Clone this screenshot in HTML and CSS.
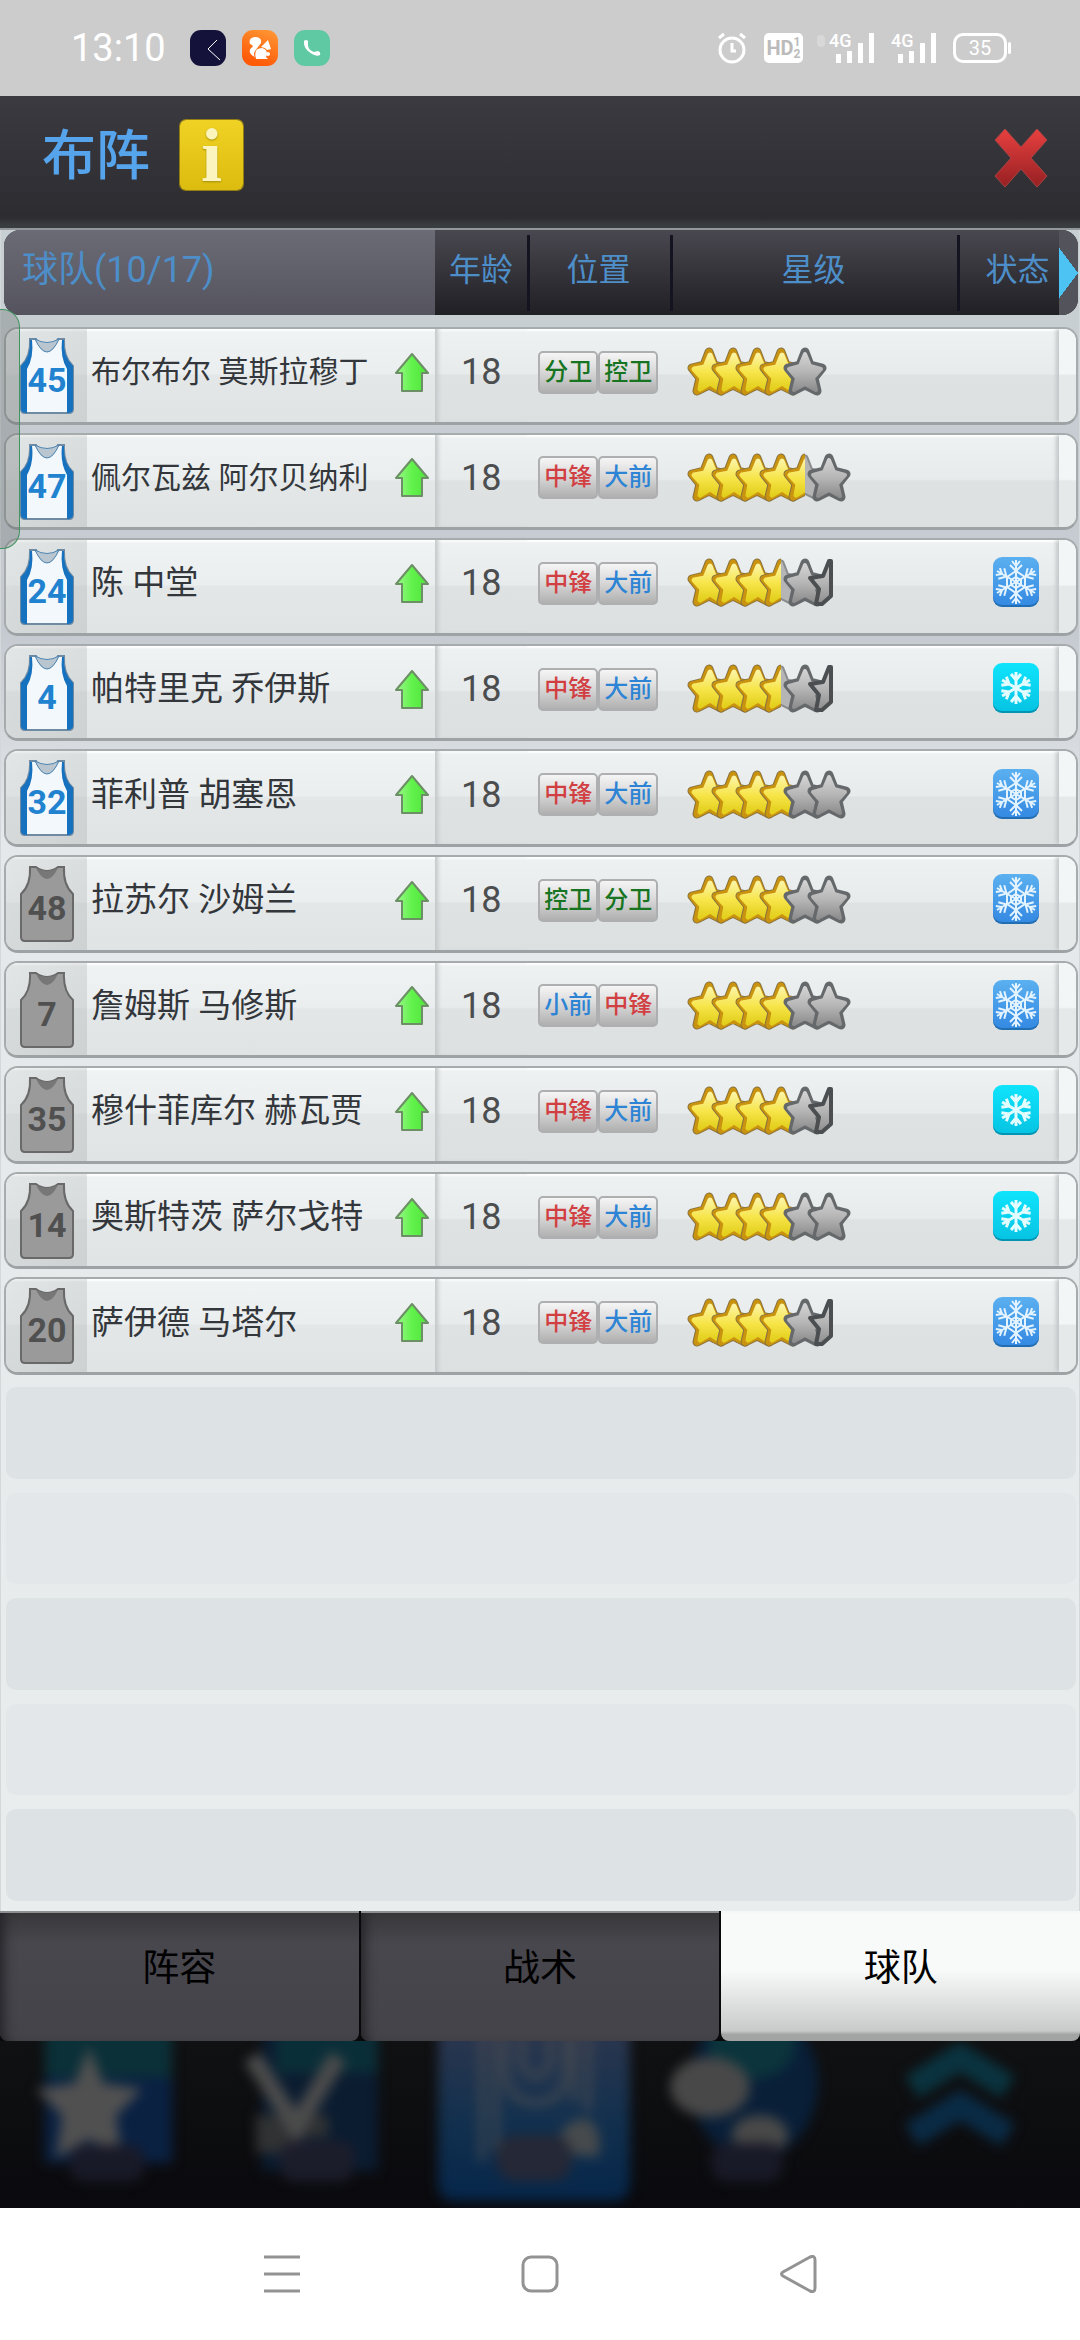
FILE: index.html
```html
<!DOCTYPE html>
<html lang="zh-CN">
<head>
<meta charset="utf-8">
<meta name="viewport" content="width=device-width, initial-scale=1">
<title>布阵</title>
<link rel="stylesheet" href="styles.css">
</head>
<body>
<svg class="sprite" aria-hidden="true">
  <defs>
    <linearGradient id="gold" x1="0" y1="0" x2="0" y2="1"><stop offset="0" stop-color="#fbf3a0"/><stop offset=".5" stop-color="#f7e54a"/><stop offset="1" stop-color="#e3cf1c"/></linearGradient>
    <linearGradient id="grey" x1="0" y1="0" x2="0" y2="1"><stop offset="0" stop-color="#d2d2d2"/><stop offset=".5" stop-color="#b5b5b5"/><stop offset="1" stop-color="#8e8e8e"/></linearGradient>
    <linearGradient id="green" x1="0" y1="0" x2="1" y2="0"><stop offset="0" stop-color="#9cf78a"/><stop offset=".5" stop-color="#62f24c"/><stop offset="1" stop-color="#4fe33a"/></linearGradient>
    <linearGradient id="red" x1="0" y1="0" x2="0" y2="1"><stop offset="0" stop-color="#e8403f"/><stop offset="1" stop-color="#962022"/></linearGradient>
    <clipPath id="left"><rect width="22" height="50"/></clipPath>
    <clipPath id="right"><rect x="22" width="24" height="50"/></clipPath>
    <path id="shape" d="M22 5 27 18 39 21 31 31 34 44 22 38 10 44 13 31 5 21 17 18z" stroke-linejoin="round"/>
  </defs>
  <symbol id="gold-star" viewBox="0 0 44 50">
    <use href="#shape" fill="#8a6a10" stroke="#857140" stroke-width="9"/>
    <use href="#shape" fill="#c9920f" stroke="#c9920f" stroke-width="7"/>
    <path d="M23 8 28 20 38 23 30 31 32 42 23 36 13 42 15 31 7 22 18 20z" fill="url(#gold)" stroke="url(#gold)" stroke-width="5" stroke-linejoin="round"/>
  </symbol>
  <symbol id="grey-star" viewBox="0 0 44 50">
    <use href="#shape" fill="#66696b" stroke="#66696b" stroke-width="9"/>
    <path d="M22 7 27 19 38 22 30 31 33 43 22 37 11 43 14 31 6 22 17 19z" fill="url(#grey)" stroke="url(#grey)" stroke-width="4" stroke-linejoin="round"/>
  </symbol>
  <symbol id="half-star" viewBox="0 0 44 50">
    <g clip-path="url(#right)"><use href="#shape" fill="#b5b5b5" stroke="#8a8c8e" stroke-width="7"/><use href="#shape" fill="#b5b5b5" stroke="#b5b5b5" stroke-width="3"/></g>
    <g clip-path="url(#left)"><use href="#gold-star" width="44" height="50"/></g>
  </symbol>
  <symbol id="cut-star" viewBox="0 0 44 50">
    <path d="M22 3 16 18 3 20 12 31 9 46 15 46 24 38V3z" fill="url(#grey)" stroke="#4c4f51" stroke-width="4" stroke-linejoin="round"/>
  </symbol>
  <symbol id="stars-4-of-5" viewBox="0 0 164 50">
    <use href="#gold-star" width="44" height="50"/><use href="#gold-star" x="24" width="44" height="50"/><use href="#gold-star" x="48" width="44" height="50"/><use href="#gold-star" x="72" width="44" height="50"/><use href="#grey-star" x="96" width="44" height="50"/>
  </symbol>
  <symbol id="stars-45-of-6" viewBox="0 0 164 50">
    <use href="#gold-star" width="44" height="50"/><use href="#gold-star" x="24" width="44" height="50"/><use href="#gold-star" x="48" width="44" height="50"/><use href="#gold-star" x="72" width="44" height="50"/><use href="#half-star" x="96" width="44" height="50"/><use href="#grey-star" x="120" width="44" height="50"/>
  </symbol>
  <symbol id="stars-35-of-55" viewBox="0 0 164 50">
    <use href="#gold-star" width="44" height="50"/><use href="#gold-star" x="24" width="44" height="50"/><use href="#gold-star" x="48" width="44" height="50"/><use href="#half-star" x="72" width="44" height="50"/><use href="#grey-star" x="96" width="44" height="50"/><use href="#cut-star" x="120" width="44" height="50"/>
  </symbol>
  <symbol id="stars-4-of-6" viewBox="0 0 164 50">
    <use href="#gold-star" width="44" height="50"/><use href="#gold-star" x="24" width="44" height="50"/><use href="#gold-star" x="48" width="44" height="50"/><use href="#gold-star" x="72" width="44" height="50"/><use href="#grey-star" x="96" width="44" height="50"/><use href="#grey-star" x="120" width="44" height="50"/>
  </symbol>
  <symbol id="stars-4-of-55" viewBox="0 0 164 50">
    <use href="#gold-star" width="44" height="50"/><use href="#gold-star" x="24" width="44" height="50"/><use href="#gold-star" x="48" width="44" height="50"/><use href="#gold-star" x="72" width="44" height="50"/><use href="#grey-star" x="96" width="44" height="50"/><use href="#cut-star" x="120" width="44" height="50"/>
  </symbol>
  <symbol id="up" viewBox="0 0 36 39">
    <path d="M18 1 34 20H28V38H8V20H2z" fill="url(#green)" stroke="#6c8f66" stroke-width="2" stroke-linejoin="round"/>
  </symbol>
  <symbol id="jersey-home" viewBox="0 0 54 78">
    <path d="M10 2H16Q27 26 38 2H44Q43 20 53 29V72Q53 76 49 76H5Q1 76 1 72V29Q11 20 10 2z" fill="#f3f8fc" stroke="#6f8ba3" stroke-width="2"/>
    <path d="M15 2Q27 28 39 2 27 9 15 2z" fill="#b9c6cf" stroke="#4d86b4"/>
    <path d="M10 3Q11 20 1 29V72Q1 76 7 76V32Q14 20 12 3zM44 3Q43 20 53 29V72Q53 76 47 76V32Q40 20 42 3z" fill="#1672bf"/>
  </symbol>
  <symbol id="jersey-bench" viewBox="0 0 54 78">
    <path d="M10 2H16Q27 10 38 2H44Q43 20 53 29V72Q53 76 49 76H5Q1 76 1 72V29Q11 20 10 2z" fill="#9a9a9a" stroke="#696969" stroke-width="2"/>
    <path d="M16 3Q27 25 38 3 27 9 16 3z" fill="#777"/>
  </symbol>
  <symbol id="flake-blue" viewBox="0 0 46 50">
    <g fill="none" stroke="#e3f3ff" stroke-width="2">
      <g id="branch"><path d="M23 25V3M19 4 23 9 27 4M17 8 23 14 29 8"/></g>
      <use href="#branch" transform="rotate(60 23 25)"/><use href="#branch" transform="rotate(120 23 25)"/><use href="#branch" transform="rotate(180 23 25)"/><use href="#branch" transform="rotate(240 23 25)"/><use href="#branch" transform="rotate(300 23 25)"/>
      <path d="M23 14 32 20V30L23 36 14 30V20zM23 20 28 23V28L23 31 18 28V23z"/>
    </g>
  </symbol>
  <symbol id="flake-cyan" viewBox="0 0 46 50">
    <g fill="none" stroke="#e3fcff" stroke-width="3">
      <g id="twig"><path d="M23 25V9M18 11 23 17 28 11"/></g>
      <use href="#twig" transform="rotate(60 23 25)"/><use href="#twig" transform="rotate(120 23 25)"/><use href="#twig" transform="rotate(180 23 25)"/><use href="#twig" transform="rotate(240 23 25)"/><use href="#twig" transform="rotate(300 23 25)"/>
    </g>
  </symbol>
</svg>

<div class="phone">
  <header class="status">
    <time>13:10</time>
    <svg class="app" viewBox="0 0 36 36" aria-hidden="true"><rect width="36" height="36" rx="11" fill="#14123a"/><path d="M27 10 18 19 30 30" fill="none" stroke="#fff"/></svg>
    <svg class="app" viewBox="0 0 36 36" aria-hidden="true"><defs><linearGradient id="uc" x1="1" y1="0" x2=".6" y2="1"><stop offset="0" stop-color="#ff9a36"/><stop offset="1" stop-color="#ff5a08"/></linearGradient></defs><rect width="36" height="36" rx="11" fill="url(#uc)"/><path d="M13 27Q5 23 9 18 13 16 8 14 6 8 13 7 20 7 19 13L13 21Q11 24 13 27zM19 17 26 10 29 19 25 20 23 18zM14 29Q11 18 20 18 27 20 24 27L26 29z" fill="#fff"/><circle cx="26" cy="24" r="2" fill="#fff"/></svg>
    <svg class="app" viewBox="0 0 36 36" aria-hidden="true"><rect width="36" height="36" rx="11" fill="#5fc9a4"/><path d="M10 11Q12 9 14 11V15Q14 20 20 22L24 21Q27 22 26 25 23 27 18 24 9 19 10 11z" fill="#fff"/></svg>
    <span class="spacer"></span>
    <svg class="alarm" viewBox="0 0 30 32" aria-hidden="true"><g fill="none" stroke="#fff" stroke-width="3"><circle cx="15" cy="18" r="12"/><path d="M2 6 7 2M28 6 23 2M15 11V19H19"/></g></svg>
    <span class="hd"><b>HD</b><span><i>1</i><i>2</i></span></span>
    <span class="signal updown"><small>4G</small><svg viewBox="0 0 39 30" aria-hidden="true"><path d="M1 21h5v9H1zM12 18h5v12h-5zM23 10h5v20h-5zM34 0h5v30h-5z" fill="#fff"/></svg></span>
    <span class="signal"><small>4G</small><svg viewBox="0 0 39 30" aria-hidden="true"><path d="M1 21h5v9H1zM12 18h5v12h-5zM23 10h5v20h-5zM34 0h5v30h-5z" fill="#fff"/></svg></span>
    <span class="battery">35</span>
  </header>

  <div class="titlebar">
    <h1>布阵</h1>
    <button class="info" type="button" aria-label="说明">i</button>
    <button class="close" type="button" aria-label="关闭"><svg viewBox="0 0 54 60"><path d="M11 1 27 19 43 1 53 12 37 30 53 48 43 59 27 41 11 59 1 48 17 30 1 12z" fill="url(#red)" stroke="#a44" stroke-width="1"/></svg></button>
  </div>

  <main class="panel">
    <table class="team">
      <thead>
        <tr><th class="count" scope="col">球队(10/17)</th><th scope="col">年龄</th><th scope="col">位置</th><th scope="col">星级</th><th class="state" scope="col">状态</th></tr>
      </thead>
      <tbody>
        <tr>
          <th scope="row"><span class="jersey"><svg viewBox="0 0 54 78"><use href="#jersey-home"/></svg><b>45</b></span><span class="name long">布尔布尔 莫斯拉穆丁</span><svg class="up"><use href="#up"/></svg></th>
          <td class="age">18</td><td class="tags"><span class="tag guard">分卫</span><span class="tag guard">控卫</span></td>
          <td class="stars"><svg><use href="#stars-4-of-5"/></svg></td><td class="state"></td>
        </tr>
        <tr>
          <th scope="row"><span class="jersey"><svg viewBox="0 0 54 78"><use href="#jersey-home"/></svg><b>47</b></span><span class="name long">佩尔瓦兹 阿尔贝纳利</span><svg class="up"><use href="#up"/></svg></th>
          <td class="age">18</td><td class="tags"><span class="tag center">中锋</span><span class="tag forward">大前</span></td>
          <td class="stars"><svg><use href="#stars-45-of-6"/></svg></td><td class="state"></td>
        </tr>
        <tr>
          <th scope="row"><span class="jersey"><svg viewBox="0 0 54 78"><use href="#jersey-home"/></svg><b>24</b></span><span class="name">陈 中堂</span><svg class="up"><use href="#up"/></svg></th>
          <td class="age">18</td><td class="tags"><span class="tag center">中锋</span><span class="tag forward">大前</span></td>
          <td class="stars"><svg><use href="#stars-35-of-55"/></svg></td><td class="state"><svg class="flake blue"><use href="#flake-blue"/></svg></td>
        </tr>
        <tr>
          <th scope="row"><span class="jersey"><svg viewBox="0 0 54 78"><use href="#jersey-home"/></svg><b>4</b></span><span class="name">帕特里克 乔伊斯</span><svg class="up"><use href="#up"/></svg></th>
          <td class="age">18</td><td class="tags"><span class="tag center">中锋</span><span class="tag forward">大前</span></td>
          <td class="stars"><svg><use href="#stars-35-of-55"/></svg></td><td class="state"><svg class="flake cyan"><use href="#flake-cyan"/></svg></td>
        </tr>
        <tr>
          <th scope="row"><span class="jersey"><svg viewBox="0 0 54 78"><use href="#jersey-home"/></svg><b>32</b></span><span class="name">菲利普 胡塞恩</span><svg class="up"><use href="#up"/></svg></th>
          <td class="age">18</td><td class="tags"><span class="tag center">中锋</span><span class="tag forward">大前</span></td>
          <td class="stars"><svg><use href="#stars-4-of-6"/></svg></td><td class="state"><svg class="flake blue"><use href="#flake-blue"/></svg></td>
        </tr>
        <tr class="bench">
          <th scope="row"><span class="jersey"><svg viewBox="0 0 54 78"><use href="#jersey-bench"/></svg><b>48</b></span><span class="name">拉苏尔 沙姆兰</span><svg class="up"><use href="#up"/></svg></th>
          <td class="age">18</td><td class="tags"><span class="tag guard">控卫</span><span class="tag guard">分卫</span></td>
          <td class="stars"><svg><use href="#stars-4-of-6"/></svg></td><td class="state"><svg class="flake blue"><use href="#flake-blue"/></svg></td>
        </tr>
        <tr class="bench">
          <th scope="row"><span class="jersey"><svg viewBox="0 0 54 78"><use href="#jersey-bench"/></svg><b>7</b></span><span class="name">詹姆斯 马修斯</span><svg class="up"><use href="#up"/></svg></th>
          <td class="age">18</td><td class="tags"><span class="tag forward">小前</span><span class="tag center">中锋</span></td>
          <td class="stars"><svg><use href="#stars-4-of-6"/></svg></td><td class="state"><svg class="flake blue"><use href="#flake-blue"/></svg></td>
        </tr>
        <tr class="bench">
          <th scope="row"><span class="jersey"><svg viewBox="0 0 54 78"><use href="#jersey-bench"/></svg><b>35</b></span><span class="name">穆什菲库尔 赫瓦贾</span><svg class="up"><use href="#up"/></svg></th>
          <td class="age">18</td><td class="tags"><span class="tag center">中锋</span><span class="tag forward">大前</span></td>
          <td class="stars"><svg><use href="#stars-4-of-55"/></svg></td><td class="state"><svg class="flake cyan"><use href="#flake-cyan"/></svg></td>
        </tr>
        <tr class="bench">
          <th scope="row"><span class="jersey"><svg viewBox="0 0 54 78"><use href="#jersey-bench"/></svg><b>14</b></span><span class="name">奥斯特茨 萨尔戈特</span><svg class="up"><use href="#up"/></svg></th>
          <td class="age">18</td><td class="tags"><span class="tag center">中锋</span><span class="tag forward">大前</span></td>
          <td class="stars"><svg><use href="#stars-4-of-6"/></svg></td><td class="state"><svg class="flake cyan"><use href="#flake-cyan"/></svg></td>
        </tr>
        <tr class="bench">
          <th scope="row"><span class="jersey"><svg viewBox="0 0 54 78"><use href="#jersey-bench"/></svg><b>20</b></span><span class="name">萨伊德 马塔尔</span><svg class="up"><use href="#up"/></svg></th>
          <td class="age">18</td><td class="tags"><span class="tag center">中锋</span><span class="tag forward">大前</span></td>
          <td class="stars"><svg><use href="#stars-4-of-55"/></svg></td><td class="state"><svg class="flake blue"><use href="#flake-blue"/></svg></td>
        </tr>
        <tr class="empty"><td></td></tr>
        <tr class="empty light"><td></td></tr>
        <tr class="empty"><td></td></tr>
        <tr class="empty light"><td></td></tr>
        <tr class="empty"><td></td></tr>
      </tbody>
    </table>
  </main>

  <div class="tabs">
    <button type="button">阵容</button>
    <button type="button">战术</button>
    <button type="button" class="active">球队</button>
  </div>

  <nav class="dock">
    <button type="button" aria-label="新闻"><svg viewBox="0 0 216 167"><path d="M45-20H172V122H45z" fill="#0a2142"/><path d="M45-20H172V36H45z" fill="#0b3038"/><path d="M89 6 103 42 142 48 116 75 122 117 89 98 56 117 62 75 36 48 75 42z" fill="#505050"/><rect x="70" y="104" width="74" height="36" rx="14" fill="#191a28"/></svg></button>
    <button type="button" aria-label="财务"><svg viewBox="0 0 216 167"><path d="M46-20H162V130H46z" fill="#0b1c30"/><path d="M60-20H162V32H60z" fill="#0a2e38"/><path d="M40 74H112V96H84V112H40z" fill="#303233"/><path d="M36 16 80 86 122 16" fill="none" stroke="#4b4b4b" stroke-width="18"/><rect x="64" y="100" width="74" height="40" rx="14" fill="#1c1d2b"/></svg></button>
    <button type="button" aria-label="球队"><svg viewBox="0 0 216 167"><defs><linearGradient id="court" x1="0" y1="0" x2="0" y2="1"><stop offset="0" stop-color="#34384e"/><stop offset=".6" stop-color="#12304e"/><stop offset="1" stop-color="#06264a"/></linearGradient></defs><rect x="6" y="-40" width="192" height="200" rx="16" fill="url(#court)"/><path d="M50-20V120M64-20V110M142-20V60M156-20V70M74-20V30Q76 62 104 62 132 62 134 30V-20M90-20V24Q104 48 118 24V-20" fill="none" stroke="#4a4d50" stroke-width="5"/><path d="M124 112Q128 76 156 78 172 90 166 116z" fill="#464a4c"/><rect x="64" y="94" width="76" height="46" rx="20" fill="#252836"/></svg></button>
    <button type="button" aria-label="消息"><svg viewBox="0 0 216 167"><ellipse cx="106" cy="42" rx="64" ry="76" fill="#091f38"/><ellipse cx="104" cy="2" rx="44" ry="36" fill="#0b343c"/><ellipse cx="62" cy="46" rx="40" ry="30" fill="#484848"/><ellipse cx="112" cy="94" rx="28" ry="20" fill="#484848"/><rect x="64" y="102" width="70" height="38" rx="14" fill="#191a28"/></svg></button>
    <button type="button" aria-label="更多"><svg viewBox="0 0 216 167"><path d="M48 46 96 16 144 46" fill="none" stroke="#0a333f" stroke-width="26"/><path d="M48 94 96 64 144 94" fill="none" stroke="#0a2b45" stroke-width="26"/></svg></button>
  </nav>

  <footer class="system">
    <button type="button" aria-label="菜单"><svg viewBox="0 0 38 38"><path d="M1 2H37M1 19H37M1 36H37" /></svg></button>
    <button type="button" aria-label="主页"><svg viewBox="0 0 38 38"><rect x="2" y="2" width="34" height="34" rx="8"/></svg></button>
    <button type="button" aria-label="返回"><svg viewBox="0 0 38 38"><path d="M31 2Q36 0 36 5V33Q36 38 31 36L4 21Q1 19 4 17z"/></svg></button>
  </footer>

  <div class="handle" aria-hidden="true"></div>
</div>
</body>
</html>
```
FILE: styles.css
```css
* { box-sizing: border-box; }
body { margin: 0; font-family: Roboto, "Noto Sans CJK SC", sans-serif; background: #fff; }
button { font: inherit; border: 0; padding: 0; background: none; color: inherit; }
svg { display: block; }
.sprite { position: absolute; width: 0; height: 0; }
.phone { position: relative; display: flex; flex-direction: column; min-height: 100vh; }

/* device status bar */
.status { display: flex; align-items: center; height: 96px; padding: 0 73px 0 71px; background: #ccc; color: #fff; }
.status time { font-size: 38px; line-height: 44px; margin-right: 24px; }
.app { width: 36px; height: 36px; margin-right: 16px; }
.spacer { flex: 1; }
.alarm { width: 30px; height: 32px; margin-right: 17px; }
.hd { display: flex; align-items: center; justify-content: center; width: 39px; height: 30px; margin-right: 26px; border-radius: 5px; background: #fff; color: #bbb; font-size: 20px; }
.hd span { display: flex; flex-direction: column; }
.hd i { font-style: normal; font-weight: 700; font-size: 12px; line-height: 12px; }
.signal { position: relative; width: 46px; height: 30px; margin-right: 16px; padding-left: 6px; }
.signal svg { width: 39px; height: 30px; }
.signal small { position: absolute; left: 0; top: 0; font-size: 18px; line-height: 16px; font-weight: 500; }
.updown::before { content: ""; position: absolute; left: -12px; top: 2px; width: 8px; height: 12px; border-radius: 4px; background: #d8d8d8; }
.battery { position: relative; width: 54px; height: 30px; border: 3px solid #fff; border-radius: 10px; text-align: center; font-size: 20px; line-height: 24px; }
.battery::after { content: ""; position: absolute; right: -7px; top: 6px; width: 3px; height: 12px; border-radius: 2px; background: #fff; }

/* title bar */
.titlebar { display: flex; align-items: center; height: 134px; padding: 0 32px 14px 42px; background: linear-gradient(#3b3a40, #2d2c31 92%, #3a3d40 98%); border-bottom: 2px solid #92989b; }
.titlebar h1 { margin: 0 30px 0 0; padding-top: 3px; font-size: 54px; line-height: 64px; font-weight: 500; color: #55a4ec; }
.info { width: 63px; height: 70px; border-radius: 6px; background: linear-gradient(#f0d225, #dcbc0e); box-shadow: 0 0 0 1px #927d14; color: #fbf5bd; font-family: "Liberation Serif", serif; font-weight: 700; font-size: 76px; line-height: 64px; text-shadow: 0 1px 2px #a38c10; }
.close { margin-left: auto; padding-top: 6px; }
.close svg { width: 54px; height: 60px; }

/* roster */
.panel { flex: 1; display: flex; padding: 0 1px 8px 3px; background: linear-gradient(#c9d0d3 0, #c5cad1 400px, #e4e8ea 600px, #e9edee); border: solid #d3d8da; border-width: 0 1px; }
.team { flex: 1; display: flex; flex-direction: column; gap: 12px; }
.team tr { display: grid; grid-template-columns: 431fr 92fr 143fr 287fr 121fr; }
.team th, .team td { padding: 0; font-weight: 400; min-width: 0; }
.team thead tr { height: 85px; border-radius: 16px; overflow: hidden; background: linear-gradient(#494850, #201f24); color: #4d8ec9; font-size: 32px; }
.team thead th { position: relative; line-height: 80px; }
.team thead th + th + th::before { content: ""; position: absolute; left: 0; top: 5px; bottom: 4px; width: 3px; background: #141420; }
.team thead .count { padding-left: 18px; text-align: left; font-size: 36px; background: linear-gradient(#6b6b76, #55545e); }
.team thead .state::after { content: ""; position: absolute; right: 0; top: 0; bottom: 0; width: 19px; background: conic-gradient(from 217deg at 100% 50%, #4cc3f3 0 106deg, transparent 0) 0 50% / 19px 54px no-repeat #53535c; }
.team tbody { flex: 1; display: grid; grid-auto-rows: minmax(90px, 1fr); gap: 8px; }
.team tbody tr { border: 2px solid #a6abad; border-bottom: 3px solid #9da2a4; border-radius: 14px; overflow: hidden; background: linear-gradient(#fff 0 1px, #edf1f2 3px, #e8ebec 48%, #dee2e3 50%, #dde0e1); }
.team tbody th, .team tbody td { display: flex; align-items: center; padding-bottom: 6px; }
.team tbody th { background: linear-gradient(#fff 0 1px, #eff3f4 3px, #ebeeef 48%, #e3e7e8 50%, #e1e4e5); }
.jersey { position: relative; align-self: stretch; flex: none; width: 81px; margin: 0 4px -6px 0; padding: 8px 0 0 14px; background: linear-gradient(90deg, rgba(150, 155, 155, .15), rgba(130, 135, 135, .2)); }
.jersey svg { width: 54px; height: 78px; }
.jersey b { position: absolute; left: 14px; top: 29px; width: 54px; text-align: center; font-size: 34px; line-height: 44px; color: #2183d0; }
.bench .jersey b { color: #505050; }
.name { flex: 1; font-size: 33px; line-height: 40px; color: #33373b; text-align: left; white-space: nowrap; }
.name.long { font-size: 30px; }
.up { width: 36px; height: 39px; margin-right: 5px; }
.age { justify-content: center; font-size: 36px; color: #4b4d4f; box-shadow: inset 5px 0 4px -2px #c3c7c9; }
.tags { justify-content: center; }
.tag { width: 60px; height: 43px; border: 2px solid #adafb0; border-radius: 5px; background: linear-gradient(#f5f5f5, #dadada 45%, #b0b0b0); text-align: center; font-size: 24px; line-height: 38px; font-weight: 500; }
.guard { color: #177421; }
.center { color: #d23f42; }
.forward { color: #2e84d4; }
.team tbody .stars { padding-left: 17px; }
.stars svg { width: 164px; height: 50px; }
.team tbody .state { position: relative; justify-content: center; padding-bottom: 8px; }
.team tbody .state::after { content: ""; position: absolute; right: 0; top: 0; bottom: 0; width: 17px; background: linear-gradient(#f3f6f7 48%, #e6e9ea 50%); box-shadow: -3px 0 4px #c3c7c9; }
.flake { width: 46px; height: 50px; border-radius: 9px; box-shadow: inset 0 -2px 0 rgba(0, 60, 90, .35); }
.blue { background: linear-gradient(#5bb0f0, #3388e2); }
.cyan { background: linear-gradient(#0fe4fc, #06c3e2); }
.team tbody .empty { margin: 4px 2px 2px; border: 0; border-radius: 10px; background: #dde2e4; }
.team tbody .light { background: #e3e7e9; }

/* section tabs */
.tabs { display: grid; grid-template-columns: repeat(3, 1fr); gap: 2px; background: #08090b; }
.tabs button { height: 130px; padding-bottom: 16px; font-size: 37px; line-height: 48px; color: #000; border-top: 2px solid #8d8f90; border-radius: 0 0 8px 8px; background: linear-gradient(#38373a, #48474d 24%, #444349); box-shadow: inset 12px 0 12px -8px #242428; }
.tabs .active { border-top-color: #f6f8f8; background: linear-gradient(#f8faf9 45%, #c9cbca 92%, #a2a4a3 95%); box-shadow: none; }

/* dimmed game dock behind the dialog */
.dock { display: grid; grid-template-columns: repeat(5, 1fr); height: 167px; overflow: hidden; background: linear-gradient(#101112, #0a0a0e); }
.dock svg { width: 100%; height: 167px; overflow: visible; filter: blur(6px); }

/* device navigation */
.system { display: flex; justify-content: center; gap: 220px; height: 132px; background: #fff; }
.system svg { width: 38px; height: 38px; fill: none; stroke: #939393; stroke-width: 3; }

/* floating edge handle */
.handle { position: absolute; left: 0; top: 309px; width: 20px; height: 240px; border: 1px solid #3f9460; border-left: 0; border-radius: 0 18px 18px 0; background: rgba(70, 80, 75, .25); }
```
